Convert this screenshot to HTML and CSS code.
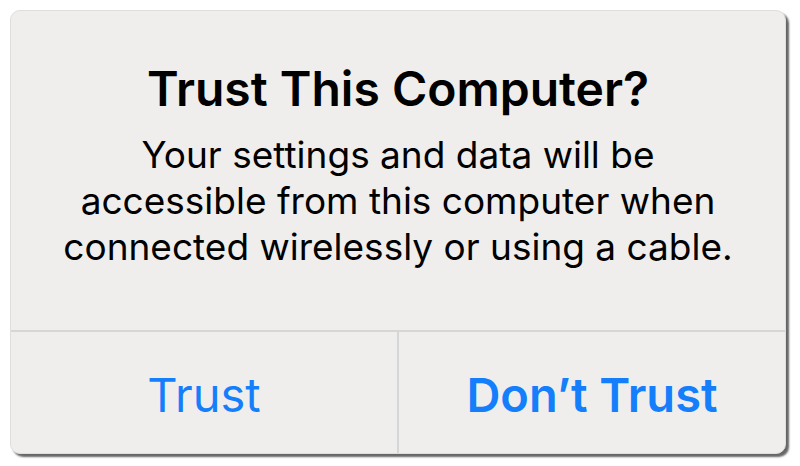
FILE: index.html
```html
<!DOCTYPE html>
<html>
<head>
<meta charset="utf-8">
<link rel="stylesheet" href="styles.css">
</head>
<body>
<div class="alert">
  <div class="content">
    <h1 class="title">Trust This Computer?</h1>
    <p class="message">Your settings and data will be<br>accessible from this computer when<br>connected wirelessly or using a cable.</p>
  </div>
  <div class="actions">
    <div class="action">Trust</div>
    <div class="action primary">Don’t Trust</div>
  </div>
</div>
</body>
</html>
```

FILE: styles.css
```css
html, body {
  margin: 0;
  padding: 0;
  background: #ffffff;
}
body {
  width: 800px;
  height: 466px;
  padding: 10px 0 0 10px;
  box-sizing: border-box;
  font-family: Inter, "Noto Sans", sans-serif;
}
.alert {
  width: 776px;
  height: 444px;
  box-sizing: border-box;
  background: #efeeed;
  border: 1px solid #dedede;
  border-radius: 10px;
  box-shadow: 3px 3px 2px rgba(0,0,0,0.6);
  display: flex;
  flex-direction: column;
  overflow: hidden;
}
.content {
  height: 319px;
  box-sizing: border-box;
  padding-top: 48px;
  text-align: center;
  color: #000;
}
.title {
  margin: 0;
  font-size: 48px;
  font-weight: 600;
  line-height: 60px;
}
.message {
  margin: 13px 0 0;
  font-size: 37px;
  font-weight: 400;
  line-height: 46px;
}
.actions {
  flex: 1;
  display: flex;
  border-top: 2px solid #d6d6d6;
}
.action {
  flex: 1;
  display: flex;
  align-items: center;
  justify-content: center;
  color: #157efb;
  font-size: 47px;
  font-weight: 400;
  padding-top: 4px;
}
.action + .action {
  border-left: 2px solid #d6d6d6;
}
.primary {
  font-weight: 600;
}
```
